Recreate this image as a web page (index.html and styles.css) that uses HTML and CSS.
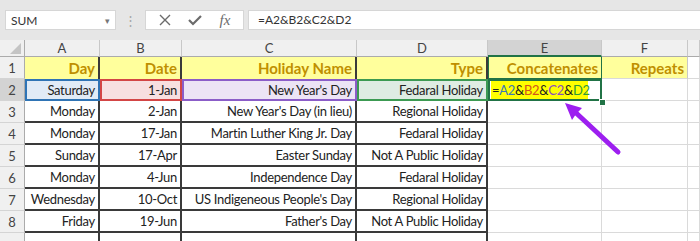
FILE: index.html
```html
<html>
<head>
    <meta charset="UTF-8">
    <title>Concatenate</title>
    <link rel="stylesheet" href="styles.css">
</head>
<body>
    <div class="bar">
        <div class="name-box"><span>SUM</span><span class="caret">&#9662;</span></div>
        <div class="grip">&#8942;</div>
        <div class="fx-buttons">
            <svg width="12" height="12" viewBox="0 0 12 12"><path d="M1 1 L11 11 M11 1 L1 11" stroke="#6b6b6b" stroke-width="1.4" fill="none"/></svg>
            <svg width="14" height="12" viewBox="0 0 14 12"><path d="M1 6 L5 10 L13 2" stroke="#6b6b6b" stroke-width="2.2" fill="none"/></svg>
            <span class="fx">fx</span>
        </div>
        <div class="formula">=A2&amp;B2&amp;C2&amp;D2</div>
    </div>

    <div class="sheet-wrap">
        <div class="sheet">
            <div class="corner"></div>
            <div class="ch">A</div>
            <div class="ch">B</div>
            <div class="ch">C</div>
            <div class="ch">D</div>
            <div class="ch ch-sel">E</div>
            <div class="ch">F</div>
            <div class="ch"></div>

            <div class="rh">1</div>
            <div class="hd">Day</div>
            <div class="hd">Date</div>
            <div class="hd">Holiday Name</div>
            <div class="hd">Type</div>
            <div class="hd hd-e">Concatenates</div>
            <div class="hd hd-f">Repeats</div>
            <div class="e"></div>

            <div class="rh rh-sel">2</div>
            <div class="d ref ref-a">Saturday</div>
            <div class="d ref ref-b">1-Jan</div>
            <div class="d ref ref-c">New Year's Day</div>
            <div class="d ref ref-d">Fedaral Holiday</div>
            <div class="e active"><span class="mark">=<b class="ca">A2</b>&amp;<b class="cb">B2</b>&amp;<b class="cc">C2</b>&amp;<b class="cd">D2</b></span></div>
            <div class="e"></div>
            <div class="e"></div>

            <div class="rh">3</div>
            <div class="d">Monday</div>
            <div class="d">2-Jan</div>
            <div class="d">New Year's Day (in lieu)</div>
            <div class="d">Regional Holiday</div>
            <div class="e"></div><div class="e"></div><div class="e"></div>

            <div class="rh">4</div>
            <div class="d">Monday</div>
            <div class="d">17-Jan</div>
            <div class="d">Martin Luther King Jr. Day</div>
            <div class="d">Fedaral Holiday</div>
            <div class="e"></div><div class="e"></div><div class="e"></div>

            <div class="rh">5</div>
            <div class="d">Sunday</div>
            <div class="d">17-Apr</div>
            <div class="d">Easter Sunday</div>
            <div class="d">Not A Public Holiday</div>
            <div class="e"></div><div class="e"></div><div class="e"></div>

            <div class="rh">6</div>
            <div class="d">Monday</div>
            <div class="d">4-Jun</div>
            <div class="d">Independence Day</div>
            <div class="d">Fedaral Holiday</div>
            <div class="e"></div><div class="e"></div><div class="e"></div>

            <div class="rh">7</div>
            <div class="d">Wednesday</div>
            <div class="d">10-Oct</div>
            <div class="d">US Indigeneous People's Day</div>
            <div class="d">Regional Holiday</div>
            <div class="e"></div><div class="e"></div><div class="e"></div>

            <div class="rh">8</div>
            <div class="d">Friday</div>
            <div class="d">19-Jun</div>
            <div class="d">Father's Day</div>
            <div class="d">Not A Public Holiday</div>
            <div class="e"></div><div class="e"></div><div class="e"></div>

            <div class="rh"></div>
            <div class="d"></div><div class="d"></div><div class="d"></div><div class="d"></div>
            <div class="e"></div><div class="e"></div><div class="e"></div>
        </div>

        <svg class="arrow" width="700" height="201" viewBox="0 0 700 201">
            <line x1="618" y1="112" x2="574" y2="71" stroke="#9d1ff0" stroke-width="5" stroke-linecap="round"/>
            <polygon points="565,63 582,68 576,74 572,80" fill="#9d1ff0"/>
        </svg>
        <div class="handle"></div>
    </div>
</body>
</html>
```

FILE: styles.css
```css
body {
    margin: 0;
    width: 700px;
    height: 241px;
    overflow: hidden;
    background-color: #e6e6e6;
    font-family: Lato, "Open Sans", sans-serif;
    font-size: 13px;
    letter-spacing: -0.3px;
    color: #222;
}

.bar {
    display: flex;
    height: 20px;
    padding: 10px 0 10px 5px;
    letter-spacing: 0;
}

.name-box {
    width: 111px;
    display: flex;
    justify-content: space-between;
    align-items: center;
    padding: 0 5px;
    box-sizing: border-box;
    background: #fff;
    border: 1px solid #d6d6d6;
    font-size: 12px;
    color: #333;
}

.caret {
    font-size: 9px;
    color: #777;
}

.grip {
    width: 29px;
    text-align: center;
    color: #a6a6a6;
    line-height: 20px;
}

.fx-buttons {
    width: 99px;
    display: flex;
    align-items: center;
    justify-content: space-around;
    padding: 0 4px;
    box-sizing: border-box;
    background: #fff;
    border: 1px solid #d6d6d6;
}

.fx {
    font-family: "Liberation Serif", serif;
    font-style: italic;
    font-size: 15px;
    color: #6b6b6b;
}

.formula {
    flex: 1;
    margin-left: 4px;
    padding-left: 9px;
    background: #fff;
    border: 1px solid #d6d6d6;
    border-right: none;
    font-size: 12px;
    line-height: 18px;
    color: #333;
}

.sheet-wrap {
    position: relative;
}

.sheet {
    display: grid;
    grid-template-columns: 25px 75px 82px 175px 131px 114px 86px 12px;
    grid-template-rows: 17px repeat(9, 22px);
    background: #fff;
}

.sheet > div {
    box-sizing: border-box;
    white-space: nowrap;
    overflow: hidden;
}

.corner {
    position: relative;
    background: #f0f0f0;
    border-right: 1px solid #ababab;
    border-bottom: 1px solid #ababab;
}

.corner::after {
    content: "";
    position: absolute;
    right: 3px;
    bottom: 2px;
    border-left: 11px solid transparent;
    border-bottom: 11px solid #c4c4c4;
}

.ch {
    background: #f0f0f0;
    border-right: 1px solid #c8c8c8;
    border-bottom: 1px solid #ababab;
    text-align: center;
    line-height: 16px;
    letter-spacing: 0;
    color: #444;
}

.ch-sel {
    background: #d3d3d3;
    border-bottom: 2px solid #217346;
}

.rh {
    background: #f0f0f0;
    border-right: 1px solid #ababab;
    border-bottom: 1px solid #d4d4d4;
    text-align: center;
    line-height: 22px;
    letter-spacing: 0;
    color: #444;
}

.rh-sel {
    background: #d3d3d3;
}

.hd {
    background: #ffff9c;
    border-right: 2px solid #3a3a3a;
    text-align: right;
    padding-right: 3px;
    font-size: 15px;
    font-weight: bold;
    letter-spacing: 0;
    color: #bf8f00;
    line-height: 22px;
}

.hd-e {
    border: 1px solid #217346;
    border-top: none;
}

.hd-f {
    border-right: 1px solid #c8c8c8;
    border-bottom: 1px solid #dadada;
}

.d {
    border-right: 2px solid #3a3a3a;
    border-bottom: 2px solid #3a3a3a;
    text-align: right;
    padding-right: 3px;
    line-height: 21px;
}

.ref {
    border: 2px solid;
    line-height: 18px;
}

.ref-a { background: #e1ebf6; border-color: #2f74b5; }
.ref-b { background: #f7dfe0; border-color: #d34545; }
.ref-c { background: #ece4f5; border-color: #8b5dc8; }
.ref-d { background: #dfece3; border-color: #3c9a52; }

.e {
    border-right: 1px solid #dadada;
    border-bottom: 1px solid #dadada;
}

.active {
    border: 2px solid #217346;
    padding: 0 12px 0 1px;
}

.mark {
    display: block;
    background: #ffff00;
    line-height: 18px;
    padding-left: 1px;
}

.mark b {
    font-weight: normal;
}

.ca { color: #3c78b8; }
.cb { color: #d2541c; }
.cc { color: #8a4cc0; }
.cd { color: #2f9a3a; }

.arrow {
    position: absolute;
    left: 0;
    top: 0;
}

.handle {
    position: absolute;
    left: 599px;
    top: 59px;
    width: 5px;
    height: 5px;
    background: #217346;
    border: 1px solid #fff;
}
```
